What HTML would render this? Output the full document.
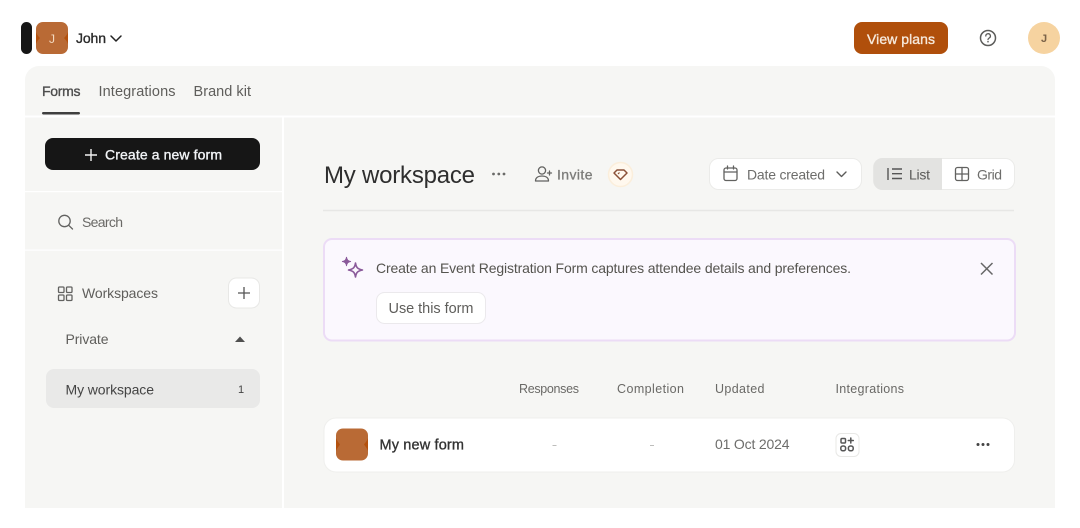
<!DOCTYPE html>
<html><head><meta charset="utf-8"><style>
html,body{margin:0;padding:0;background:#fff;width:1080px;height:528px;overflow:hidden}
svg{display:block}
text{font-family:"Liberation Sans",sans-serif;font-size:14px;fill:#5f5e5b}
.ic{fill:none;stroke:#626260;stroke-width:1.3;stroke-linecap:round;stroke-linejoin:round}
</style></head><body>
<svg width="1080" height="528" viewBox="0 0 1080 528" xmlns="http://www.w3.org/2000/svg">
<rect x="21" y="22" width="11" height="32" rx="5.5" fill="#161616"/>
<rect x="36" y="22" width="32" height="32" rx="7" fill="#b96a35"/>
<path d="M36 32 C37 35 39 37 40 38 C39 39 37 41 36 44Z M68 32 C67 35 65 37 64 38 C65 39 67 41 68 44Z" fill="#b4510d"/>
<text x="49" y="43" style="font-size:12px;fill:#f3d9c0" textLength="5">J</text>
<text x="76" y="43" style="font-size:14px;fill:#2a2a2a;stroke:#2a2a2a;stroke-width:.35" textLength="30">John</text>
<path d="M111 36 L116 41 L121 36" fill="none" stroke="#222" stroke-width="1.5" stroke-linecap="round" stroke-linejoin="round"/>

<rect x="854" y="22" width="94" height="32" rx="8" fill="#b04f0b"/>
<text x="867" y="44" style="font-size:14px;fill:#f6e9dc;stroke:#f6e9dc;stroke-width:.35" textLength="68">View plans</text>
<circle cx="988" cy="38" r="7.5" fill="none" stroke="#5c5c5a" stroke-width="1.5"/>
<path d="M985.8 36 a2.3 2.3 0 1 1 3.4 2 c-.8.5-1.2.9-1.2 1.6" fill="none" stroke="#5c5c5a" stroke-width="1.3" stroke-linecap="round"/>
<circle cx="988" cy="41.7" r=".8" fill="#5c5c5a"/>
<circle cx="1044" cy="38" r="16" fill="#f6d3a0"/>
<text x="1041" y="42" style="font-size:11px;font-weight:bold;fill:#7a6248" textLength="6">J</text>

<rect x="25" y="66" width="1030" height="442" fill="#f6f6f4" rx="14"/>
<rect x="25" y="490" width="1030" height="18" fill="#f6f6f4"/>
<text x="42" y="96" style="font-size:14px;fill:#4d4d4d;stroke:#4d4d4d;stroke-width:.35" textLength="38.5">Forms</text>
<text x="98.500" y="96" style="font-size:14.500px;fill:#5f5e5b" textLength="77">Integrations</text>
<text x="193.500" y="96" style="font-size:14.500px;fill:#5f5e5b" textLength="57.500">Brand kit</text>
<rect x="42" y="112" width="38" height="2.500" rx="1.200" fill="#3f3f3f"/>
<rect x="25" y="115.500" width="1030" height="2" fill="#fff"/>
<rect x="282" y="117" width="2" height="391" fill="#fff"/>

<rect x="45" y="138" width="215" height="32" rx="8" fill="#161616"/>
<path d="M91 149 V161 M85 155 H97" stroke="#f2f2f2" stroke-width="1.400" fill="none"/>
<text x="105" y="159.500" style="font-size:14px;fill:#f2f4f7;stroke:#f2f4f7;stroke-width:.35" textLength="117">Create a new form</text>
<rect x="25" y="191" width="257" height="1.200" fill="#fff"/>
<rect x="25" y="249.500" width="257" height="1.200" fill="#fff"/>
<circle cx="64.500" cy="221" r="5.700" class="ic"/>
<path d="M68.700 225.300 L72.500 229" class="ic"/>
<text x="82" y="227" style="font-size:14px;fill:#6a6966" textLength="41">Search</text>

<g class="ic"><rect x="58.500" y="287" width="5.500" height="5.500" rx="1"/><rect x="66.500" y="287" width="5.500" height="5.500" rx="1"/><rect x="58.500" y="295" width="5.500" height="5.500" rx="1"/><rect x="66.500" y="295" width="5.500" height="5.500" rx="1"/></g>
<text x="82" y="298" style="font-size:14px;fill:#5f5e5b" textLength="76">Workspaces</text>
<rect x="228.500" y="278" width="31" height="30" rx="8" fill="#fff" stroke="#e8e8e6"/>
<path d="M244 287 V299 M238 293 H250" stroke="#555" stroke-width="1.300" fill="none"/>
<text x="65.500" y="344" style="font-size:14px;fill:#5f5e5b" textLength="43">Private</text>
<path d="M235 342 L240 336.500 L245 342Z" fill="#4f4f4f"/>
<rect x="46" y="369" width="214" height="39" rx="8" fill="#e9e9e8"/>
<text x="65.500" y="394.500" style="font-size:14px;fill:#444" textLength="88.500">My workspace</text>
<text x="238" y="393" style="font-size:11px;fill:#444" textLength="6">1</text>

<text x="324" y="183" style="font-size:24px;fill:#2e2e2e" textLength="151">My workspace</text>
<g fill="#6a6a68"><circle cx="493.500" cy="174" r="1.400"/><circle cx="498.800" cy="174" r="1.400"/><circle cx="504" cy="174" r="1.400"/></g>
<g class="ic"><circle cx="542" cy="170.500" r="3.600"/><path d="M535.500 181 c0-3.500 3-5 6.500-5 s6.500 1.500 6.500 5Z"/><path d="M549.500 171 V175 M547.500 173 H551.500"/></g>
<text x="557" y="179.500" style="font-size:14px;fill:#7c7c7a;stroke:#7c7c7a;stroke-width:.3" textLength="35.500">Invite</text>
<circle cx="620.500" cy="174.500" r="12" fill="#fff8ee" stroke="#fbeedb" stroke-width="1.500"/>
<path d="M614 173 L617 170 H624 L627 173 L620.500 179.500Z" fill="none" stroke="#8b5138" stroke-width="1.500" stroke-linejoin="round"/>
<path d="M619.500 172.500 L618 174" stroke="#8b5138" stroke-width="1.200" fill="none"/>

<rect x="709.500" y="158.500" width="152" height="31" rx="9" fill="#fff" stroke="#ebebe9"/>
<g class="ic"><rect x="724" y="168" width="13" height="12.500" rx="2"/><path d="M724 172 H737 M727.500 166 V169 M733.500 166 V169"/></g>
<text x="747" y="179.500" style="font-size:14px;fill:#6d6d6b" textLength="78">Date created</text>
<path d="M837 172 L841.500 176.500 L846 172" fill="none" stroke="#5c5c5a" stroke-width="1.400" stroke-linecap="round" stroke-linejoin="round"/>
<rect x="873.500" y="158.500" width="141" height="31" rx="9" fill="#fff" stroke="#ebebe9"/>
<path d="M942 158 H882.500 a9 9 0 0 0 -9 9 V181 a9 9 0 0 0 9 9 H942Z" fill="#e3e3e1"/>
<path d="M888 168 V180 M892 169 H902 M892 173.700 H902 M892 178.500 H902" stroke="#555" stroke-width="1.400" fill="none"/>
<text x="909" y="179.500" style="font-size:14px;fill:#5a5a58" textLength="21">List</text>
<g class="ic"><rect x="955.500" y="167.500" width="13" height="13" rx="2"/><path d="M962 167.500 V180.500 M955.500 174 H968.500"/></g>
<text x="977" y="179.500" style="font-size:14px;fill:#6d6d6b" textLength="25">Grid</text>
<rect x="323" y="209.800" width="691" height="1.500" fill="#e7e7e5"/>

<rect x="324" y="239" width="691" height="101.500" rx="8" fill="#fbf8fe" stroke="#ecdcf6" stroke-width="2"/>
<path d="M346.500 257 C347 260 348 261 351 261.500 C348 262 347 263 346.500 266 C346 263 345 262 342 261.500 C345 261 346 260 346.500 257Z" fill="#8a5a9a" stroke="#8a5a9a" stroke-width=".8"/>
<path d="M355.500 263 C356.200 267.500 357.500 269 362.500 270 C357.500 271 356.200 272.500 355.500 277 C354.800 272.500 353.500 271 348.500 270 C353.500 269 354.800 267.500 355.500 263Z" fill="none" stroke="#8a5a9a" stroke-width="1.600" stroke-linejoin="round"/>
<text x="376" y="273" style="font-size:14px;fill:#55544f" textLength="475">Create an Event Registration Form captures attendee details and preferences.</text>
<path d="M981 263 L992.500 274.500 M992.500 263 L981 274.500" stroke="#666" stroke-width="1.500" fill="none"/>
<rect x="376.500" y="292.500" width="109" height="31" rx="8" fill="#fff" stroke="#ebe9ec"/>
<text x="388.500" y="313" style="font-size:14.500px;fill:#5f5e5b" textLength="85">Use this form</text>

<text x="519" y="393" style="font-size:12.500px;fill:#6a6966" textLength="60">Responses</text>
<text x="617" y="393" style="font-size:12.500px;fill:#6a6966" textLength="67">Completion</text>
<text x="715" y="393" style="font-size:12.500px;fill:#6a6966" textLength="49.500">Updated</text>
<text x="835.500" y="393" style="font-size:12.500px;fill:#6a6966" textLength="68.500">Integrations</text>

<rect x="324" y="418" width="690.500" height="54" rx="12" fill="#fff" stroke="#efefed"/>
<rect x="336" y="428.500" width="32" height="32" rx="7" fill="#b96a35"/>
<path d="M336 438 C337 441 339 443 340 444.500 C339 446 337 448 336 451Z M368 438 C367 441 365 443 364 444.500 C365 446 367 448 368 451Z" fill="#b4510d"/>
<text x="379.500" y="449.500" style="font-size:14.500px;fill:#333;stroke:#333;stroke-width:.35" textLength="84.500">My new form</text>
<rect x="552.500" y="445" width="4" height="1" fill="#bdbdbb"/>
<rect x="650" y="445" width="4" height="1" fill="#bdbdbb"/>
<text x="715" y="449" style="font-size:14px;fill:#6d6d6b" textLength="74.500">01 Oct 2024</text>
<rect x="836" y="433.500" width="23" height="23" rx="5" fill="#fff" stroke="#e8e8e6"/>
<g class="ic" style="stroke-width:1.500;stroke:#555"><rect x="841" y="438.500" width="4.500" height="4.500" rx="1"/><rect x="840.800" y="446" width="4.800" height="4.800" rx="2"/><rect x="848.400" y="446" width="4.800" height="4.800" rx="2"/><path d="M850.800 438 V443 M848.300 440.500 H853.300"/></g>
<g fill="#444"><circle cx="978" cy="444.500" r="1.500"/><circle cx="983" cy="444.500" r="1.500"/><circle cx="988" cy="444.500" r="1.500"/></g>
</svg>
</body></html>
